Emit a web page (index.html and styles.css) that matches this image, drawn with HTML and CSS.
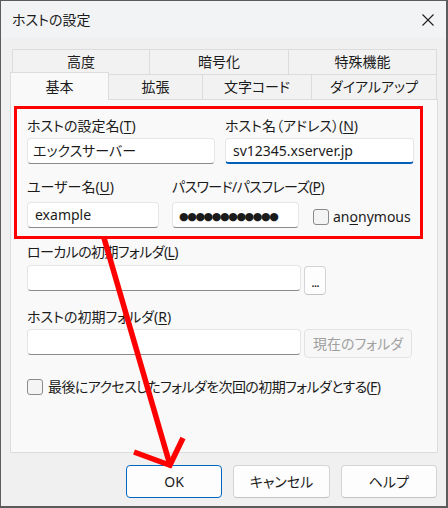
FILE: index.html
```html
<!DOCTYPE html>
<html lang="ja">
<head>
<meta charset="utf-8">
<title>ホストの設定</title>
<link rel="stylesheet" href="styles.css">
</head>
<body>
<div class="window">
  <div class="titlebar">
    <span class="title">ホストの設定</span>
    <svg class="close" width="12" height="12" viewBox="0 0 12 12"><path d="M0.5 0.5 L11.5 11.5 M11.5 0.5 L0.5 11.5" stroke="#1f1f1f" stroke-width="1.1" fill="none"/></svg>
  </div>
  <div class="body">
    <div class="tabs">
      <div class="tabrow row1">
        <div class="tab first w-kodo">高度</div>
        <div class="tab w-ango">暗号化</div>
        <div class="tab w-tokushu">特殊機能</div>
      </div>
      <div class="tabrow row2">
        <div class="tab first sel w-kihon">基本</div>
        <div class="tab w-kakucho">拡張</div>
        <div class="tab w-moji">文字コード</div>
        <div class="tab w-dial">ダイアルアップ</div>
      </div>
    </div>
    <div class="panel">
      <div class="highlight">
        <div class="row row-a">
          <div class="field f-name">
            <div class="label">ホストの設定名(<u>T</u>)</div>
            <div class="input">エックスサーバー</div>
          </div>
          <div class="field f-host">
            <div class="label">ホスト名（アドレス）(<u>N</u>)</div>
            <div class="input focused">sv12345.xserver.jp</div>
          </div>
        </div>
        <div class="row row-b">
          <div class="field f-user">
            <div class="label">ユーザー名(<u>U</u>)</div>
            <div class="input">example</div>
          </div>
          <div class="field f-pass">
            <div class="label tight">パスワード/パスフレーズ(<u>P</u>)</div>
            <div class="input pass"><span class="dots">●●●●●●●●●●●●</span></div>
          </div>
          <div class="check anon">
            <span class="box"></span>
            <span class="check-text">an<u>o</u>nymous</span>
          </div>
        </div>
      </div>
      <div class="lower">
        <div class="label l-local tight">ローカルの初期フォルダ(<u>L</u>)</div>
        <div class="line">
          <div class="input wide"></div>
          <div class="btn small">...</div>
        </div>
        <div class="label l-remote">ホストの初期フォルダ(<u>R</u>)</div>
        <div class="line line2">
          <div class="input wide"></div>
          <div class="btn disabled">現在のフォルダ</div>
        </div>
        <div class="check last">
          <span class="box"></span>
          <span class="check-text tight">最後にアクセスしたフォルダを次回の初期フォルダとする(<u>F</u>)</span>
        </div>
      </div>
    </div>
    <div class="buttons">
      <div class="btn dlg default">OK</div>
      <div class="btn dlg">キャンセル</div>
      <div class="btn dlg">ヘルプ</div>
    </div>
  </div>
</div>
<svg class="arrow" width="448" height="508" viewBox="0 0 448 508">
  <g stroke="#ff0000" stroke-width="5.5" fill="none" stroke-linecap="butt">
    <path d="M104 238 L170 465"/>
    <path d="M134 452 L172 466"/>
    <path d="M183 438 L169 467"/>
  </g>
</svg>
</body>
</html>
```

FILE: styles.css
```css
html, body {
  margin: 0;
  padding: 0;
}
body {
  position: relative;
  width: 448px;
  height: 508px;
  font-family: "Noto Sans", "Noto Sans CJK JP", sans-serif;
  font-size: 14px;
  color: #1b1b1b;
  font-feature-settings: "palt";
  overflow: hidden;
}
.window {
  box-sizing: border-box;
  width: 448px;
  height: 508px;
  border: 1px solid #5c5c5c;
  border-right-width: 2px;
  border-bottom-width: 2px;
  background: #f0f0f0;
  display: flex;
  flex-direction: column;
}
.titlebar {
  height: 37px;
  display: flex;
  align-items: center;
  justify-content: space-between;
  padding: 0 10px 0 11px;
  background: #f2f3f5;
}
.title {
  font-size: 14px;
  line-height: 20px;
}
.close {
  display: block;
  margin-right: 2px;
}
.body {
  flex: 1;
  padding: 11px 9px 0 9px;
  display: flex;
  flex-direction: column;
}
.tabs {
  display: flex;
  flex-direction: column;
}
.tabrow {
  display: flex;
  height: 25px;
}
.row1 {
  margin-left: 2px;
}
.row2 {
  align-items: flex-end;
}
.tab {
  box-sizing: border-box;
  height: 25px;
  line-height: 24px;
  text-align: center;
  background: #f2f2f2;
  border-top: 1px solid #dcdcdc;
  border-right: 1px solid #dcdcdc;
}
.tab.first {
  border-left: 1px solid #dcdcdc;
}
.w-kodo { width: 138px; }
.w-ango { width: 139px; }
.w-tokushu { width: 148px; }
.w-kihon { width: 99px; }
.w-kakucho { width: 94px; }
.w-moji { width: 109px; }
.w-dial { width: 125px; }
.tab.sel {
  height: 28px;
  line-height: 27px;
  margin-bottom: -1px;
  background: #f9f9f9;
  position: relative;
  z-index: 1;
}
.panel {
  box-sizing: border-box;
  width: 428px;
  height: 354px;
  border: 1px solid #dcdcdc;
  background: #f9f9f9;
  padding: 6px 0 0 3px;
}
.highlight {
  box-sizing: border-box;
  width: 409px;
  height: 133px;
  border: 3px solid #ff0000;
  padding: 7px 0 0 10px;
}
.row {
  display: flex;
}
.row-b {
  margin-top: 13px;
  align-items: flex-end;
}
.label {
  line-height: 20px;
  height: 20px;
  white-space: nowrap;
}
.tight {
  letter-spacing: -0.6px;
}
.label u, .check-text u {
  text-underline-offset: 2px;
}
.input {
  box-sizing: border-box;
  height: 26px;
  background: #ffffff;
  border: 1px solid #e6e6e6;
  border-bottom-color: #8a8a8a;
  border-radius: 4px;
  padding: 0 5px;
  line-height: 24px;
  white-space: nowrap;
  overflow: hidden;
}
.row-a .input {
  margin-top: 2px;
}
.row-b .input {
  margin-top: 5px;
}
.input.focused {
  border-bottom: 2px solid #005fb8;
  padding-left: 7px;
}
.f-name { width: 188px; margin-right: 10px; }
.f-host { width: 189px; }
.f-user { width: 132px; margin-right: 13px; }
.f-pass { width: 127px; margin-right: 14px; }
.f-user .input { padding-left: 7px; }
.dots {
  font-family: "DejaVu Sans", sans-serif;
  font-size: 11px;
  letter-spacing: -1.4px;
  line-height: 24px;
  padding-left: 1px;
}
.check {
  display: flex;
  align-items: center;
  height: 20px;
}
.check .box {
  box-sizing: border-box;
  width: 16px;
  height: 16px;
  border: 1px solid #8a8a8a;
  border-radius: 3px;
  background: #f4f4f4;
  flex: none;
}
.check-text {
  white-space: nowrap;
  line-height: 20px;
}
.anon {
  margin-bottom: 1px;
}
.anon .check-text {
  margin-left: 4px;
}
.lower {
  padding-left: 13px;
}
.l-local {
  margin-top: 3px;
}
.line {
  display: flex;
  align-items: flex-start;
  margin-top: 3px;
}
.line2 {
  margin-top: 2px;
}
.l-remote {
  margin-top: 12px;
}
.input.wide {
  width: 274px;
}
.btn {
  box-sizing: border-box;
  background: #fdfdfd;
  border: 1px solid #d4d4d4;
  border-bottom-color: #c2c2c2;
  border-radius: 4px;
  text-align: center;
  white-space: nowrap;
}
.btn.small {
  width: 22px;
  height: 29px;
  margin-left: 3px;
  margin-top: 1px;
  line-height: 30px;
  font-size: 13px;
  letter-spacing: -1px;
}
.btn.disabled {
  width: 108px;
  height: 29px;
  margin-left: 3px;
  line-height: 27px;
  color: #a0a0a0;
  background: #f7f7f7;
  border-color: #e3e3e3;
}
.check.last {
  margin-top: 19px;
}
.check.last .check-text {
  margin-left: 5px;
}
.buttons {
  display: flex;
  gap: 11px;
  margin-top: 12px;
  margin-left: 116px;
}
.btn.dlg {
  width: 97px;
  height: 33px;
  line-height: 31px;
}
.btn.default {
  border: 1px solid #0067c0;
}
.arrow {
  position: absolute;
  left: 0;
  top: 0;
  pointer-events: none;
}
```
